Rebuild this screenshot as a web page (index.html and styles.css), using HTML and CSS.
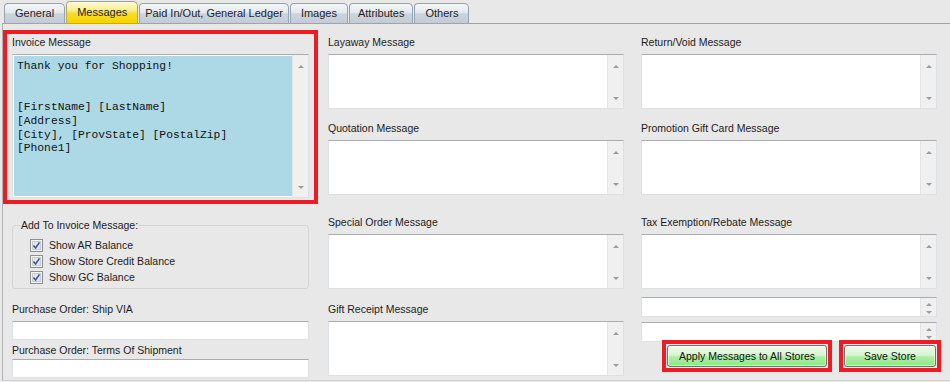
FILE: index.html
```html
<!DOCTYPE html>
<html lang="en">
<head>
    <meta charset="UTF-8">
    <title>Store Setup - Messages</title>
    <link rel="stylesheet" href="styles.css">
</head>
<body>
    <div class="tabs">
        <div class="tab">General</div>
        <div class="tab tab-active">Messages</div>
        <div class="tab tab-wide">Paid In/Out, General Ledger</div>
        <div class="tab">Images</div>
        <div class="tab tab-narrow">Attributes</div>
        <div class="tab">Others</div>
    </div>

    <div class="panel">
        <!-- left column -->
        <div class="col col-left">
            <div class="highlight">
                <div class="field-label">Invoice Message</div>
                <div class="memo memo-blue memo-tall">
                    <pre class="memo-body">Thank you for Shopping!


[FirstName] [LastName]
[Address]
[City], [ProvState] [PostalZip]
[Phone1]</pre>
                    <div class="vscroll"><i class="arrow-up"></i><i class="arrow-down"></i></div>
                </div>
            </div>

            <fieldset class="group">
                <legend>Add To Invoice Message:</legend>
                <div class="check-row">
                    <svg class="check" width="13" height="13" viewBox="0 0 13 13"><rect x="0.5" y="0.5" width="12" height="12" fill="#f4f4f4" stroke="#8e8f8f"/><rect x="2.5" y="2.5" width="8" height="8" fill="#dfe6ee" stroke="#c4ccd6"/><path d="M3.5 6.5 L5.6 9 L9.5 3.4" fill="none" stroke="#3f53a0" stroke-width="1.5"/></svg>
                    <span>Show AR Balance</span>
                </div>
                <div class="check-row">
                    <svg class="check" width="13" height="13" viewBox="0 0 13 13"><rect x="0.5" y="0.5" width="12" height="12" fill="#f4f4f4" stroke="#8e8f8f"/><rect x="2.5" y="2.5" width="8" height="8" fill="#dfe6ee" stroke="#c4ccd6"/><path d="M3.5 6.5 L5.6 9 L9.5 3.4" fill="none" stroke="#3f53a0" stroke-width="1.5"/></svg>
                    <span>Show Store Credit Balance</span>
                </div>
                <div class="check-row">
                    <svg class="check" width="13" height="13" viewBox="0 0 13 13"><rect x="0.5" y="0.5" width="12" height="12" fill="#f4f4f4" stroke="#8e8f8f"/><rect x="2.5" y="2.5" width="8" height="8" fill="#dfe6ee" stroke="#c4ccd6"/><path d="M3.5 6.5 L5.6 9 L9.5 3.4" fill="none" stroke="#3f53a0" stroke-width="1.5"/></svg>
                    <span>Show GC Balance</span>
                </div>
            </fieldset>

            <div class="field-label po-label">Purchase Order: Ship VIA</div>
            <div class="textbox"></div>
            <div class="field-label po-label po-label-second">Purchase Order: Terms Of Shipment</div>
            <div class="textbox"></div>
        </div>

        <!-- middle column -->
        <div class="col col-mid">
            <div class="field field-first">
                <div class="field-label">Layaway Message</div>
                <div class="memo"><div class="memo-body"></div><div class="vscroll"><i class="arrow-up"></i><i class="arrow-down"></i></div></div>
            </div>
            <div class="field">
                <div class="field-label">Quotation Message</div>
                <div class="memo"><div class="memo-body"></div><div class="vscroll"><i class="arrow-up"></i><i class="arrow-down"></i></div></div>
            </div>
            <div class="field field-spaced">
                <div class="field-label">Special Order Message</div>
                <div class="memo"><div class="memo-body"></div><div class="vscroll"><i class="arrow-up"></i><i class="arrow-down"></i></div></div>
            </div>
            <div class="field field-last">
                <div class="field-label">Gift Receipt Message</div>
                <div class="memo"><div class="memo-body"></div><div class="vscroll"><i class="arrow-up"></i><i class="arrow-down"></i></div></div>
            </div>
        </div>

        <!-- right column -->
        <div class="col col-right">
            <div class="field field-first">
                <div class="field-label">Return/Void Message</div>
                <div class="memo"><div class="memo-body"></div><div class="vscroll"><i class="arrow-up"></i><i class="arrow-down"></i></div></div>
            </div>
            <div class="field">
                <div class="field-label">Promotion Gift Card Message</div>
                <div class="memo"><div class="memo-body"></div><div class="vscroll"><i class="arrow-up"></i><i class="arrow-down"></i></div></div>
            </div>
            <div class="field field-spaced">
                <div class="field-label">Tax Exemption/Rebate Message</div>
                <div class="memo"><div class="memo-body"></div><div class="vscroll"><i class="arrow-up"></i><i class="arrow-down"></i></div></div>
            </div>
            <div class="memo memo-small memo-small-first"><div class="memo-body"></div><div class="vscroll"><i class="arrow-up"></i><i class="arrow-down"></i></div></div>
            <div class="memo memo-small"><div class="memo-body"></div><div class="vscroll"><i class="arrow-up"></i><i class="arrow-down"></i></div></div>

            <div class="actions">
                <div class="mark"><button class="btn btn-apply">Apply Messages to All Stores</button></div>
                <div class="mark"><button class="btn btn-save">Save Store</button></div>
            </div>
        </div>
    </div>
</body>
</html>
```

FILE: styles.css
```css
/* General styles */
* {
    margin: 0;
    padding: 0;
    box-sizing: border-box;
}

body {
    font-family: "Liberation Sans", Arial, sans-serif;
    font-size: 10.5px;
    color: #1c1c1c;
    background-color: #e8e8e8;
    width: 950px;
    height: 382px;
    overflow: hidden;
}

/* Tab strip */
.tabs {
    display: flex;
    align-items: flex-end;
    gap: 1px;
    height: 23px;
    padding-left: 4px;
}

.tab {
    height: 20px;
    line-height: 19px;
    padding: 0 10px;
    font-size: 11px;
    color: #1e1e1e;
    border: 1px solid #97a2b0;
    border-bottom: none;
    border-radius: 4px 5px 0 0;
    background: linear-gradient(#f5f7f9, #e3e8ed 45%, #cbd3dc 52%, #c3ccd6);
}

.tab-active {
    height: 22px;
    line-height: 21px;
    border-color: #b4a75c;
    background: linear-gradient(#fffbd8, #fcec86 40%, #f8dc24 55%, #f5d300);
}

.tab-wide {
    padding: 0 5px;
}

.tab-narrow {
    padding: 0 8px;
}

/* Page body */
.panel {
    display: flex;
    height: 358px;
    margin-left: 2px;
    padding-top: 6px;
    border-top: 1px solid #a3a3a3;
    border-left: 1px solid #b3b3b3;
    border-bottom: 1px solid #d2d2d2;
}

.col {
    display: flex;
    flex-direction: column;
}

.col-left {
    width: 315px;
}

.col-mid {
    width: 296px;
    margin-left: 10px;
}

.col-right {
    position: relative;
    width: 296px;
    margin-left: 17px;
}

.field-label {
    line-height: 13px;
    margin-bottom: 5px;
    white-space: nowrap;
}

.field {
    margin-top: 13px;
}

.field-first {
    margin-top: 6px;
}

.field-spaced {
    margin-top: 21px;
}

.field-last {
    margin-top: 14px;
}

/* Red call-out round the invoice message */
.highlight {
    border: 4px solid #ed1c24;
    padding: 2px 5px 2px;
}

/* Multi-line text boxes */
.memo {
    display: flex;
    height: 55px;
    background-color: #fff;
    border: 1px solid #dde0e6;
    border-top-color: #a9acb3;
}

.memo-body {
    flex: 1;
}

.memo-tall {
    height: 144px;
}

.memo-blue .memo-body {
    background-color: #add8e6;
    border: 1px solid #fff;
    border-right: none;
    padding: 4px 3px;
    font-family: "Liberation Mono", "Courier New", monospace;
    font-size: 11.3px;
    line-height: 13.7px;
    color: #111;
    white-space: pre;
    overflow: hidden;
}

.memo-small {
    height: 20px;
}

.memo-small-first {
    margin-top: 8px;
    margin-bottom: 5px;
}

.vscroll {
    width: 16px;
    background-color: #f0f0f0;
    border-left: 1px solid #e4e4e4;
    display: flex;
    flex-direction: column;
    align-items: center;
    justify-content: space-between;
    padding: 10px 0 8px;
}

.memo-small .vscroll {
    padding: 5px 0 2px;
}

.arrow-up,
.arrow-down {
    width: 0;
    height: 0;
    border-left: 3px solid transparent;
    border-right: 3px solid transparent;
}

.arrow-up {
    border-bottom: 3px solid #9c9c9c;
}

.arrow-down {
    border-top: 3px solid #9c9c9c;
}

/* Add To Invoice Message group */
.group {
    margin: 15px 0 0 9px;
    width: 297px;
    padding: 5px 0 3px 7px;
    border: 1px solid #d4d4d4;
    border-radius: 3px;
}

.group legend {
    padding: 0 1px;
    line-height: 13px;
}

.check-row {
    display: flex;
    align-items: center;
    gap: 6px;
    height: 16px;
    margin-left: 10px;
}

.check {
    flex-shrink: 0;
}

/* Purchase order fields */
.po-label {
    margin: 14px 0 5px 9px;
}

.po-label-second {
    margin-top: 4px;
    margin-bottom: 2px;
}

.textbox {
    margin-left: 9px;
    width: 297px;
    height: 19px;
    background-color: #fff;
    border: 1px solid #dde0e6;
    border-top-color: #a9acb3;
}

/* Buttons laid over the last box */
.actions {
    position: absolute;
    left: 21px;
    top: 310px;
    display: flex;
    gap: 7px;
}

.mark {
    border: 4px solid #ed1c24;
    padding: 1px;
}

.btn {
    display: block;
    height: 22px;
    font-family: "Liberation Sans", Arial, sans-serif;
    font-size: 10.5px;
    color: #111;
    border: 1px solid #707070;
    border-radius: 3px;
    background: linear-gradient(#f0fbec, #d7f5cf 45%, #acf0a2 55%, #8ee886);
    box-shadow: inset 0 0 0 1px rgba(255, 255, 255, 0.6);
    cursor: pointer;
}

.btn-apply {
    width: 160px;
}

.btn-save {
    width: 92px;
}
```
